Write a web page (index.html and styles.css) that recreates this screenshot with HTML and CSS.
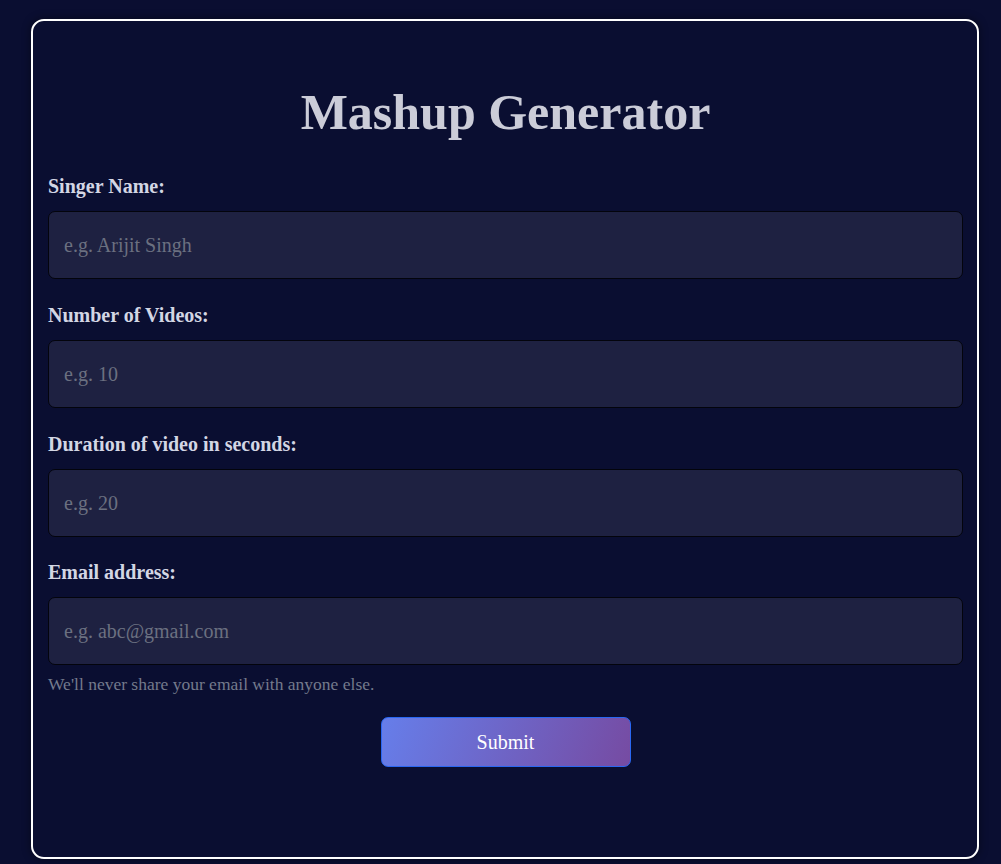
FILE: index.html
```html
<!DOCTYPE html>
<html lang="en">
<head>
<meta charset="utf-8">
<title>Mashup Generator</title>
<link rel="stylesheet" href="styles.css">
</head>
<body>
<div class="card">
  <h1 class="title">Mashup Generator</h1>
  <form class="form">
    <div class="group">
      <label class="label" for="singer">Singer Name:</label>
      <input class="input" id="singer" type="text" placeholder="e.g. Arijit Singh">
    </div>
    <div class="group">
      <label class="label" for="num">Number of Videos:</label>
      <input class="input" id="num" type="text" placeholder="e.g. 10">
    </div>
    <div class="group">
      <label class="label" for="dur">Duration of video in seconds:</label>
      <input class="input" id="dur" type="text" placeholder="e.g. 20">
    </div>
    <div class="group group-email">
      <label class="label" for="email">Email address:</label>
      <input class="input" id="email" type="text" placeholder="e.g. abc@gmail.com">
      <small class="help">We'll never share your email with anyone else.</small>
    </div>
    <div class="actions">
      <button class="submit" type="button">Submit</button>
    </div>
  </form>
</div>
</body>
</html>
```

FILE: styles.css
```css
html, body {
  margin: 0;
  background: #0a0e31;
}
body {
  padding: 19px 22px 5px 31px;
  font-family: "Liberation Serif", "Times New Roman", serif;
  font-size: 20px;
  color: #d2d5e2;
}
.card {
  border: 2px solid #ffffff;
  border-radius: 13px;
  padding: 62px 14px 90px 15px;
  box-shadow: 0 0 10px rgba(0, 0, 0, 0.45);
  background: #0a0e31;
}
.title {
  margin: 0;
  text-align: center;
  font-size: 50px;
  line-height: 58px;
  font-weight: bold;
  color: #cbccd8;
}
.form {
  display: flex;
  flex-direction: column;
  margin-top: 34px;
}
.group {
  display: flex;
  flex-direction: column;
}
.group + .group {
  margin-top: 25px;
}
.group + .group-email {
  margin-top: 24px;
}
.label {
  font-weight: bold;
  font-size: 20px;
  line-height: 23px;
  color: #d3d6e4;
  margin-bottom: 13px;
}
.input {
  box-sizing: border-box;
  height: 68px;
  width: 100%;
  margin: 0;
  padding: 0 15px;
  background: #1e2141;
  border: 1px solid #03040c;
  border-radius: 7px;
  font-family: "Liberation Serif", "Times New Roman", serif;
  font-size: 20px;
  color: #d2d5e2;
  outline: none;
}
.input::placeholder {
  color: #6b7080;
  opacity: 1;
}
.help {
  margin-top: 9px;
  font-size: 17.5px;
  line-height: 20px;
  color: #747a8c;
}
.actions {
  display: flex;
  justify-content: center;
  margin-top: 23px;
}
.submit {
  box-sizing: border-box;
  width: 250px;
  height: 50px;
  border: 1px solid #2a67f2;
  border-radius: 7px;
  background: linear-gradient(110deg, #667eea 0%, #764ba2 100%);
  color: #ffffff;
  font-family: "Liberation Serif", "Times New Roman", serif;
  font-size: 20px;
  cursor: pointer;
}
```
